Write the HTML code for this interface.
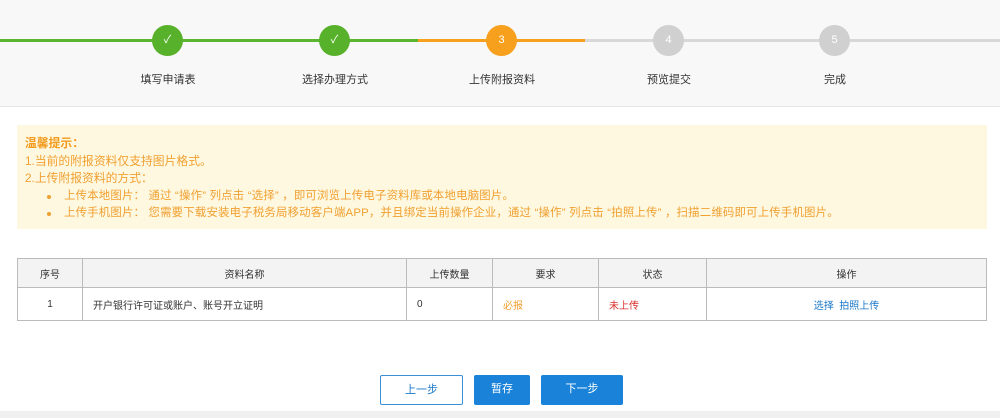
<!DOCTYPE html><html><head><meta charset="utf-8"><style>
*{margin:0;padding:0;box-sizing:border-box}
body{width:1000px;height:418px;background:#fff;font-family:"Liberation Sans","Noto Sans CJK SC",sans-serif;font-size:11px;color:#333;position:relative;overflow:hidden}
.top{position:absolute;left:0;top:0;width:1000px;height:107px;background:#f8f8f8;border-bottom:1px solid #e6e6e6}
.ln{position:absolute;top:39px;height:3px}
.c{position:absolute;top:25px;width:31px;height:31px;border-radius:50%;color:#fff;text-align:center;line-height:31px;font-size:11px}
.lb{position:absolute;top:71px;width:120px;text-align:center;font-size:11px;color:#333}
.tip{position:absolute;left:17px;top:125px;width:970px;height:104px;background:#fff8e1;color:#f0a030;padding:10px 8px;line-height:17.5px;font-size:11.8px}
.tip b{font-weight:bold;color:#f29b1e}
.bl{padding-left:22px;letter-spacing:0.2px;position:relative;font-size:11.4px}
.bl:before{content:"";position:absolute;left:22px;top:7px;width:4px;height:4px;border-radius:50%;background:#f0a030}
.bl span{padding-left:17px}
table{position:absolute;left:17px;top:258px;width:970px;border-collapse:collapse;font-size:10px}
td,th{border:1px solid #bbb;font-weight:normal;height:30px;text-align:center}
th{background:#f3f3f3;height:29px}
td{height:33px}
.btn{position:absolute;top:375px;height:30px;text-align:center;line-height:29px;font-size:11px;border-radius:2px}
</style></head><body>
<div class="top">
<div class="ln" style="left:0;width:418px;background:#5cb531"></div>
<div class="ln" style="left:418px;width:167px;background:#f6a01d"></div>
<div class="ln" style="left:585px;width:415px;background:#d8d8d8"></div>
<div class="c" style="left:152px;background:#57b12b">✓</div>
<div class="c" style="left:319px;background:#57b12b">✓</div>
<div class="c" style="left:486px;background:#f6a01d">3</div>
<div class="c" style="left:653px;background:#d0d0d0">4</div>
<div class="c" style="left:819px;background:#d0d0d0">5</div>
<div class="lb" style="left:108px">填写申请表</div>
<div class="lb" style="left:275px">选择办理方式</div>
<div class="lb" style="left:442px">上传附报资料</div>
<div class="lb" style="left:609px">预览提交</div>
<div class="lb" style="left:775px">完成</div>
</div>
<div class="tip"><b>温馨提示：</b><br>1.当前的附报资料仅支持图片格式。<br>2.上传附报资料的方式：
<div class="bl"><span>上传本地图片： 通过 “操作” 列点击 “选择” ，即可浏览上传电子资料库或本地电脑图片。</span></div>
<div class="bl"><span>上传手机图片： 您需要下载安装电子税务局移动客户端APP，并且绑定当前操作企业，通过 “操作” 列点击 “拍照上传” ，扫描二维码即可上传手机图片。</span></div></div>
<table><tr><th style="width:65px">序号</th><th style="width:324px">资料名称</th><th style="width:86px">上传数量</th><th style="width:106px">要求</th><th style="width:108px">状态</th><th>操作</th></tr>
<tr><td>1</td><td style="text-align:left;padding-left:10px">开户银行许可证或账户、账号开立证明</td><td style="text-align:left;padding-left:10px">0</td><td style="text-align:left;padding-left:10px;color:#f0a030">必报</td><td style="text-align:left;padding-left:10px;color:#d9302a">未上传</td><td style="color:#1a78c8">选择&nbsp;&nbsp;拍照上传</td></tr></table>
<div class="btn" style="left:380px;width:83px;border:1px solid #3b8fd6;color:#1a78c8;background:#fff">上一步</div>
<div class="btn" style="left:474px;width:56px;background:#1a82d8;color:#fff">暂存</div>
<div class="btn" style="left:541px;width:82px;background:#1a82d8;color:#fff">下一步</div>
<div style="position:absolute;left:0;top:411px;width:1000px;height:7px;background:#f0f0f0"></div>
</body></html>
